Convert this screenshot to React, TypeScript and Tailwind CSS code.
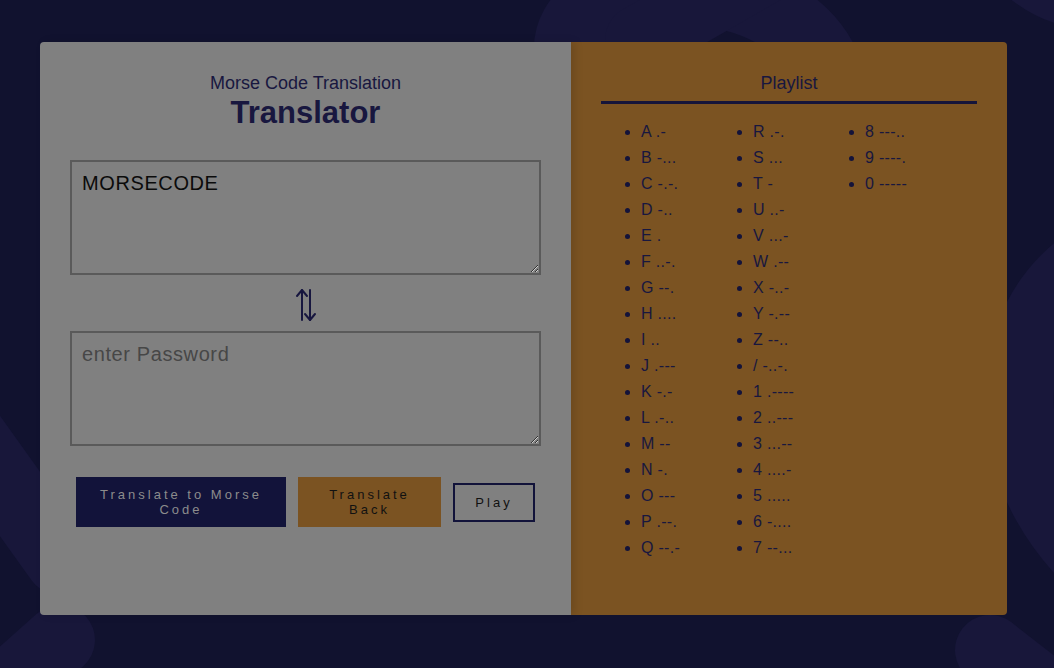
import React from "react";

const col1 = ["A .-","B -...","C -.-.","D -..","E .","F ..-.","G --.","H ....","I ..","J .---","K -.-","L .-..","M --","N -.","O ---","P .--.","Q --.-"];
const col2 = ["R .-.","S ...","T -","U ..-","V ...-","W .--","X -..-","Y -.--","Z --..","/ -..-.","1 .----","2 ..---","3 ...--","4 ....-","5 .....","6 -....","7 --..."];
const col3 = ["8 ---..","9 ----.","0 -----"];
const items = [...col1, ...col2, ...col3];

function Background() {
  return (
    <svg className="absolute inset-0" width="1054" height="668" viewBox="0 0 1054 668">
      <g fill="none" stroke="#18173a" strokeWidth="70" strokeLinecap="round">
        <path d="M570 60 C 560 10, 620 -20, 700 -10 C 780 0, 820 40, 830 80" />
        <path d="M640 40 L 780 -40" />
        <path d="M1030 -30 C 1080 10, 1120 -10, 1140 -40" />
        <path d="M1090 260 C 1000 320, 990 460, 1090 560" />
        <path d="M-40 420 L 60 560" />
        <path d="M-30 720 L 60 640" />
        <path d="M990 650 L 1080 720" />
      </g>
    </svg>
  );
}

function SwapIcon() {
  return (
    <svg width="22" height="34" viewBox="0 0 22 34" fill="none" stroke="#17163f" strokeWidth="2" strokeLinecap="round" strokeLinejoin="round">
      <path d="M7 2 V32" />
      <path d="M2 8 L7 2 L12 8" />
      <path d="M15 2 V32" />
      <path d="M10 26 L15 32 L20 26" />
    </svg>
  );
}

export default function App() {
  const font = { fontFamily: '"Liberation Sans", Arial, Helvetica, sans-serif' };
  return (
    <div className="relative w-[1054px] h-[668px] overflow-hidden bg-[#11122f]" style={font}>
      <Background />
      <div className="relative flex pt-[42px] pl-[40px]">
        <div className="w-[531px] h-[573px] bg-[#808080] rounded-l-[4px] flex flex-col items-center pt-[31px] shadow-[4px_0_8px_rgba(0,0,0,0.12)] z-10">
          <div className="text-[18px] leading-[21px] text-[#18173f]">Morse Code Translation</div>
          <div className="text-[31px] leading-[36px] font-bold text-[#18173f] mt-[1px]">Translator</div>
          <textarea
            defaultValue="MORSECODE"
            className="mt-[29px] w-[471px] h-[115px] border-2 border-[#5a5a5a] bg-transparent px-[10px] py-[9px] text-[20px] leading-[24px] tracking-[0.6px] text-[#0b0b0b] outline-none resize-y"
            style={font}
          />
          <div className="mt-[13px] h-[34px]"><SwapIcon /></div>
          <textarea
            placeholder="enter Password"
            className="mt-[9px] w-[471px] h-[115px] border-2 border-[#5a5a5a] bg-transparent px-[10px] py-[9px] text-[20px] leading-[24px] tracking-[0.6px] text-[#0b0b0b] placeholder:text-[#474747] outline-none resize-y"
            style={font}
          />
          <div className="mt-[31px] flex items-center gap-[12px]">
            <button className="w-[210px] h-[50px] bg-[#12133a] text-[#8c8c8c] text-[13px] leading-[15px] tracking-[3px] px-[16px]" style={font}>
              Translate to Morse Code
            </button>
            <button className="w-[143px] h-[50px] bg-[#7b5322] text-[#111111] text-[13px] leading-[15px] tracking-[3px] px-[22px]" style={font}>
              Translate Back
            </button>
            <button className="w-[82px] h-[39px] border-2 border-[#12133a] bg-transparent text-[#111111] text-[13px] leading-[15px] tracking-[3px]" style={font}>
              Play
            </button>
          </div>
        </div>
        <div className="w-[436px] h-[573px] bg-[#7b5322] rounded-r-[4px] px-[30px] pt-[31px]">
          <div className="text-center text-[18px] leading-[21px] text-[#18173f]">Playlist</div>
          <div className="mt-[7px] h-[3px] bg-[#15143a]" />
          <ul className="mt-[15px] pl-[40px] list-disc grid grid-cols-3 grid-rows-[repeat(17,26px)] grid-flow-col text-[16px] leading-[26px] text-[#18173f] tracking-[0.3px]">
            {items.map((t) => (
              <li key={t} className="marker:text-[#14133a]">{t}</li>
            ))}
          </ul>
        </div>
      </div>
    </div>
  );
}
